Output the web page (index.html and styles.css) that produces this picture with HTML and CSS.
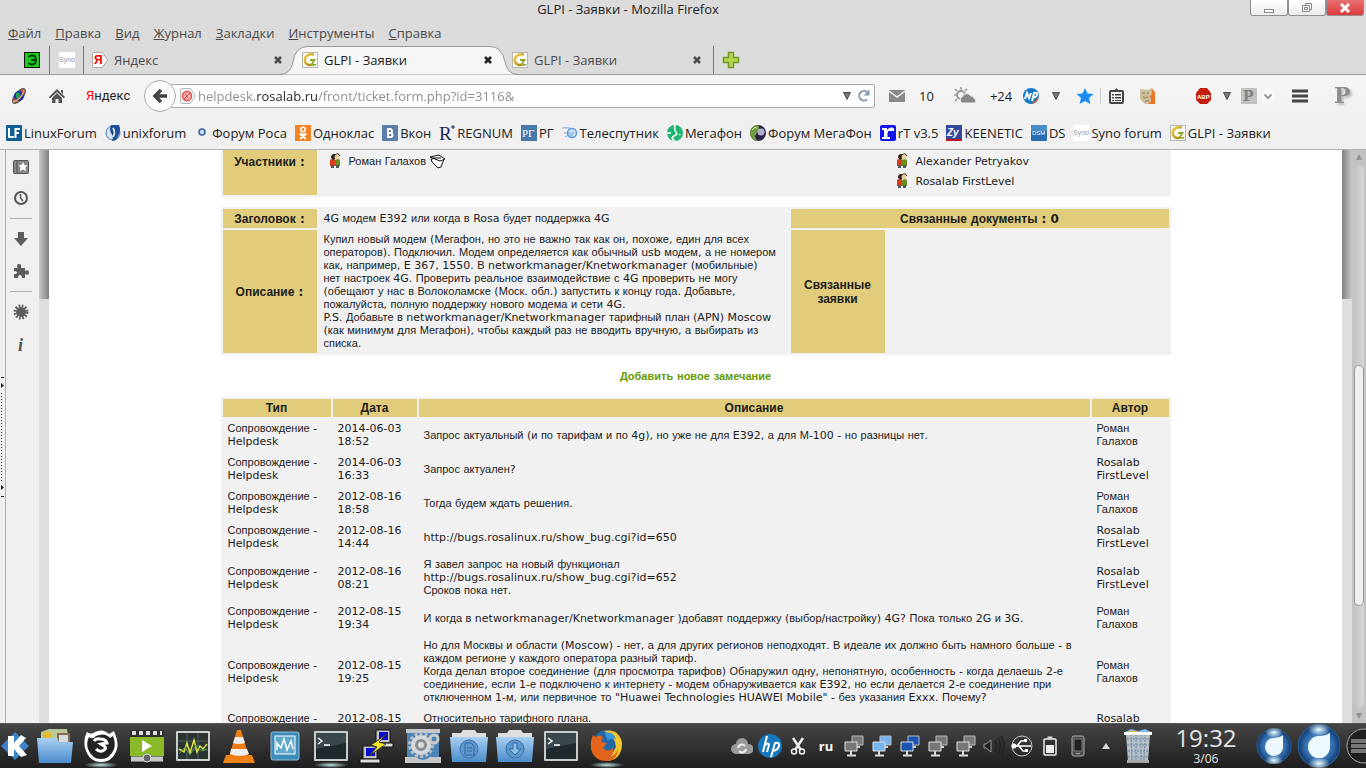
FILE: index.html
```html
<!DOCTYPE html>
<html lang="ru">
<head>
  <meta charset="UTF-8">
  <meta name="viewport" content="width=device-width, initial-scale=1.0">
  <title>GLPI - Заявки - Mozilla Firefox</title>
  <link rel="stylesheet" href="styles.css">
</head>
<body>
  <!-- shared icons -->
  <svg class="defs" width="0" height="0">
    <defs>
      <linearGradient id="gGold" x1="0" y1="0" x2="1" y2="1"><stop offset="0" stop-color="#f0cf50"/><stop offset="1" stop-color="#b07c00"/></linearGradient>
      <linearGradient id="gFold" x1="0" y1="0" x2="0" y2="1"><stop offset="0" stop-color="#a8d0f2"/><stop offset="1" stop-color="#4a8ccc"/></linearGradient>
      <linearGradient id="gMetal" x1="0" y1="0" x2="0" y2="1"><stop offset="0" stop-color="#fff"/><stop offset="1" stop-color="#a4a4a4"/></linearGradient>
      <radialGradient id="gDrop" cx=".5" cy=".5" r=".5"><stop offset="0" stop-color="#7fb4e4"/><stop offset=".7" stop-color="#2f68a8"/><stop offset="1" stop-color="#123a70"/></radialGradient>
      <radialGradient id="gGlow"><stop offset="0" stop-color="#e8ffff"/><stop offset="1" stop-color="#e8ffff" stop-opacity="0"/></radialGradient>
    </defs>
    <symbol id="glpi" viewBox="0 0 16 16"><rect x=".5" y=".5" width="15" height="15" fill="#fff" stroke="#b5b5a8"/><path d="M12 2.500C6.500 1.300 2.800 4 2.800 8c0 4 3 5.500 6.500 4.800" fill="none" stroke="url(#gGold)" stroke-width="2.600"/><path d="M8 8h4.500L9.500 12.800h4.500" fill="none" stroke="#8aa820" stroke-width="1.800"/></symbol>
    <symbol id="syno" viewBox="0 0 16 16"><rect width="16" height="16" fill="#fff"/><text x="0" y="10" font-size="7" fill="#999" font-family="Liberation Sans">Syno</text></symbol>
    <symbol id="cross" viewBox="0 0 10 10"><path d="M2 2l6 6M8 2L2 8" stroke="currentColor" stroke-width="2.600"/></symbol>
    <symbol id="tri" viewBox="0 0 10 10"><path d="M1.500 1.500h7L5 8.500z" fill="#777" stroke="#4c4c4c"/></symbol>
    <symbol id="people" viewBox="0 0 12 16"><path d="M1 7q2-2 5 0v6H1z" fill="#d83c1c"/><path d="M6 7q3-2 5 0v6H6z" fill="#6c8c20"/><path d="M2 5q0-4 3-4 2 0 2 4l-2 2z" fill="#2c2018"/><circle cx="8" cy="4" r="2.500" fill="#e6cf9a"/><path d="M6 2q3-3 5 1" stroke="#222" fill="none"/><path d="M2 12h3v3H2zM7 12h3v3H7z" fill="#4c5a5c"/></symbol>
    <symbol id="term" viewBox="0 0 36 36"><rect x="1" y="3" width="34" height="30" rx="1" fill="#c8ccca"/><rect x="3" y="5" width="30" height="26" fill="#20292d"/><path d="M3 5h30v10L3 21z" fill="#4d5b62" opacity=".6"/><path d="M5 10l4 3-4 3M11 17h6" fill="none" stroke="#fff" stroke-width="1.500"/></symbol>
    <symbol id="net" viewBox="0 0 20 22"><path d="M8 1h11v9H8z" fill="currentColor" stroke="#b9b9b9"/><path d="M12 11h4v2h-4z" fill="#ccc"/><path d="M1 7h12v9H1z" fill="currentColor" stroke="#e0e0e0"/><path d="M7 16v4M3 20.500h9" stroke="#ddd" stroke-width="2"/></symbol>
    <symbol id="folder" viewBox="0 0 38 34"><path d="M2 9V4h9l2-3h12l2 3h9v5z" fill="#dedede"/><path d="M0 8h38l-2 25H2z" fill="url(#gFold)"/></symbol>
    <symbol id="drop" viewBox="0 0 40 40"><circle cx="20" cy="20" r="19" fill="url(#gDrop)" stroke="#28609c"/><ellipse cx="20" cy="5" rx="10" ry="6" fill="url(#gGlow)"/><ellipse cx="20" cy="36" rx="10" ry="6" fill="url(#gGlow)"/><path d="M30 8v13a10 10 0 1 1-10-10q6 0 10-3z" fill="#edf8ff"/></symbol>
  </svg>

  <header class="titlebar">
    <h1 class="window-title">GLPI - Заявки - Mozilla Firefox</h1>
    <div class="window-buttons">
      <button aria-label="Свернуть"><svg width="12" height="12"><rect x="1.500" y="7.500" width="9" height="3" fill="#fff" stroke="#888"/></svg></button>
      <button aria-label="Восстановить"><svg width="12" height="12"><path d="M4.500 3.500v-2h6v6h-2M1.500 3.500h7v6h-7zM3.500 5.500h3v2h-3z" fill="none" stroke="#888"/></svg></button>
      <button class="close" aria-label="Закрыть"><svg width="12" height="12"><path d="M2 2l8 8M10 2l-8 8" stroke="#fff" stroke-width="3"/></svg></button>
    </div>
  </header>

  <nav class="menubar">
    <a href="#"><u>Ф</u>айл</a>
    <a href="#"><u>П</u>равка</a>
    <a href="#"><u>В</u>ид</a>
    <a href="#"><u>Ж</u>урнал</a>
    <a href="#"><u>З</u>акладки</a>
    <a href="#"><u>И</u>нструменты</a>
    <a href="#"><u>С</u>правка</a>
  </nav>

  <div class="tabs">
    <div class="tab pinned first"><svg width="16" height="16"><rect x=".5" y=".5" width="15" height="15" fill="#1fc71f" stroke="#111"/><path d="M4.500 5Q6 3.500 8 3.500q4 0 4 4.500t-4 4.500q-2 0-3.500-1.500M7 8h5" fill="none" stroke="#063c06" stroke-width="1.800"/></svg></div>
    <div class="tab pinned"><svg width="16" height="16"><use href="#syno"/></svg></div>
    <div class="tab">
      <svg width="16" height="16"><path d="M1.500.5h9l5 7.500-5 7.500h-9q-1 0-1-1v-13q0-1 1-1z" fill="#f8f8f8" stroke="#aaa"/><text x="2" y="12" font-size="12" font-weight="bold" fill="#f00" font-family="Liberation Sans">Я</text></svg>
      <span>Яндекс</span>
      <button aria-label="Закрыть вкладку"><svg width="10" height="10"><use href="#cross"/></svg></button>
    </div>
    <div class="tab active">
      <svg class="tab-shape" width="238" height="29"><path d="M0 28.500Q11 28 13 16Q15 .5 28 .5H210Q222 .5 225 16Q227 28 238 28.500" fill="#f6f6f6" stroke="#999"/></svg>
      <svg width="16" height="16"><use href="#glpi"/></svg>
      <span>GLPI - Заявки</span>
      <button aria-label="Закрыть вкладку"><svg width="10" height="10"><use href="#cross"/></svg></button>
    </div>
    <div class="tab last">
      <svg width="16" height="16"><use href="#glpi"/></svg>
      <span>GLPI - Заявки</span>
      <button aria-label="Закрыть вкладку"><svg width="10" height="10"><use href="#cross"/></svg></button>
    </div>
    <button class="new-tab" aria-label="Новая вкладка"><svg width="18" height="18"><path d="M6.500 1.500h5v5h5v5h-5v5h-5v-5h-5v-5h5z" fill="#b4d44c" stroke="#6c9a28" stroke-width="1.500"/></svg></button>
  </div>

  <div class="navbar">
    <div class="nav-left">
      <svg width="18" height="18"><ellipse cx="9" cy="9" rx="9" ry="4" transform="rotate(-50 9 9)" fill="#b8584c" stroke="#555"/><circle cx="9" cy="9" r="5" fill="#152ab0"/><path d="M6 6q4-2 4 2t-3 4q-2-3-1-6z" fill="#1fa050"/><path d="M3 15Q12 12 14 3" fill="none" stroke="#d8a060" stroke-width="1.500"/></svg>
      <svg width="16" height="16"><path d="M0 9L8 1l8 8-1 1.500L8 4 1 10.500zM3 10l5-5 5 5v5H9.500v-4h-3v4H3zM12 2h2v4l-2-2z" fill="#555"/></svg>
      <span class="ya"><b>Я</b>ндекс</span>
    </div>
    <button class="back" aria-label="Назад"><svg width="16" height="16"><path d="M9 2L3 8l6 6M3 8h12" fill="none" stroke="#444" stroke-width="3.500"/></svg></button>
    <div class="urlbar">
      <svg width="16" height="16"><path d="M1.500.5h9l5 7.500-5 7.500h-9q-1 0-1-1v-13q0-1 1-1z" fill="#eee" stroke="#bbb"/><circle cx="7" cy="8" r="4.500" fill="#fbb" stroke="#e05050" stroke-width="1.500"/><path d="M4 11l6-6M5 6l3 4" stroke="#d33"/></svg>
      <input type="text" aria-label="Адрес" value="helpdesk.rosalab.ru/front/ticket.form.php?id=3116&amp;">
      <svg width="10" height="10"><use href="#tri"/></svg>
      <svg width="14" height="14"><path d="M10 10.500A4.800 4.800 0 1 1 10 3" fill="none" stroke="#8a9db0" stroke-width="2"/><path d="M12.500 0v6.500H6.500z" fill="#8a9db0"/></svg>
    </div>
    <div class="nav-right">
      <svg width="16" height="16"><path d="M0 2h16v12H0z" fill="#888"/><path d="M0 3l8 6 8-6" fill="none" stroke="#f2f2f2" stroke-width="1.500"/></svg>
      <span class="count">10</span>
      <svg class="weather" width="24" height="18"><circle cx="8" cy="8" r="4" fill="none" stroke="#999" stroke-width="2"/><path d="M8 0v3M1 8h2M2 2l2 2M14 2l-2 2M2 14l2-2" stroke="#999" stroke-width="1.500"/><path d="M9 16a3.500 3.500 0 0 1 0-6 5 5 0 0 1 9-1q3 0 3 2.500 2 .5 2 2.500t-2 2z" fill="#888" stroke="#eee"/></svg>
      <span class="temp">+24</span>
      <svg width="16" height="16"><circle cx="8" cy="8" r="8" fill="#1678c8"/><path d="M15.500 8A8 8 0 0 1 8 16q5-3 7.500-8z" fill="#f06020"/><path d="M2 11l2-6 2 5 2-5M9 13l2-8q4-1 3 2t-4 2" fill="none" stroke="#fff" stroke-width="2"/></svg>
      <svg class="arrow" width="10" height="10"><use href="#tri"/></svg>
      <svg class="star" width="18" height="18"><path d="M9 1l2.500 5.500 6 .5-4.500 4 1.500 6L9 14l-5.500 3L5 11 .5 7l6-.5z" fill="#1a8cf4"/></svg>
      <svg class="clip" width="15" height="16"><path d="M2 3h11q1 0 1 1v10q0 1-1 1H2q-1 0-1-1V4q0-1 1-1z" fill="none" stroke="#444" stroke-width="2"/><path d="M4 2h2l1.500-2L9 2h2v2H4zM3 6h2v1.500H3zM6 6h6v1.500H6zM3 9h2v1.500H3zM6 9h6v1.500H6zM3 12h2v1H3zM6 12h6v1H6z" fill="#444"/></svg>
      <svg class="face" width="17" height="16"><path d="M1 1l8 1 4-2 3 4v12H6L1 11z" fill="#cdbf9c"/><path d="M12 0l4 4v12H9q5-3 2-8 4-3 1-8z" fill="#ee7622"/><path d="M3 5h3M8 5h2M4 9q2 2 5 0M6 13h4" fill="none" stroke="#8a7a5c"/></svg>
      <svg width="17" height="16"><path d="M5 0h7l4 5v7l-4 4H5l-4-4V5z" fill="#c42010"/><text x="2" y="11" font-size="6" font-weight="bold" fill="#fff" font-family="Liberation Sans">ABP</text></svg>
      <svg class="arrow" width="10" height="10"><use href="#tri"/></svg>
      <svg width="16" height="16"><rect width="16" height="16" fill="#c0c0c0"/><text x="2" y="13" font-size="14" font-weight="bold" fill="#808080" font-family="DejaVu Serif">P</text></svg>
      <svg class="chev" width="16" height="16"><circle cx="8" cy="8" r="7.500" fill="#f8f8f8"/><path d="M4.500 6.500L8 10l3.500-3.500" fill="none" stroke="#999" stroke-width="2"/></svg>
      <svg class="burger" width="16" height="16"><path d="M0 3h16M0 8h16M0 13h16" stroke="#444" stroke-width="3"/></svg>
      <svg class="big-p" width="22" height="26"><text x="0" y="20" font-size="22" font-weight="bold" fill="#8d8d8d" font-family="DejaVu Serif">P</text></svg>
    </div>
  </div>

  <nav class="bookmarks">
    <a href="#"><svg width="16" height="16"><rect width="16" height="16" rx="1" fill="#0f5f96"/><path d="M3 3v9h5M9.500 13V4H14M10 8h3" fill="none" stroke="#fff" stroke-width="2"/></svg>LinuxForum</a>
    <a href="#"><svg width="16" height="16"><circle cx="8" cy="8" r="7" fill="#d6e4f4" stroke="#4b7cb8"/><path d="M6 0h8q3 6-3 15l-4 1q2-5-1-8-2-4 0-8z" fill="#1d4e96"/><path d="M8 3q3 5 0 9" fill="none" stroke="#fff" stroke-width="1.500"/></svg>unixforum</a>
    <a href="#"><svg width="16" height="16"><circle cx="8" cy="7" r="3" fill="#c4def6" stroke="#3c6498" stroke-width="1.500"/></svg>Форум Роса</a>
    <a href="#"><svg width="16" height="16"><rect width="16" height="16" fill="#f58220"/><circle cx="8" cy="4.500" r="2.200" fill="none" stroke="#fff" stroke-width="1.600"/><path d="M4.500 8.500q3.500 2 7 0M5 14l6-5M11 14L5 9" fill="none" stroke="#fff" stroke-width="1.800"/></svg>Одноклас</a>
    <a href="#"><svg width="16" height="16"><rect width="16" height="16" rx="1" fill="#5b7fa8"/><path d="M6 4v8h2.500q2 0 2-2t-2-2H6h2q2 0 2-2T8 4z" fill="none" stroke="#fff" stroke-width="1.800"/></svg>Вкон</a>
    <a href="#"><svg width="16" height="16"><text x="0" y="15" font-size="19" fill="#182458" font-family="Liberation Serif">R</text><path d="M14 0v4M12 2h4" stroke="#182458"/></svg>REGNUM</a>
    <a href="#"><svg width="16" height="16"><rect width="16" height="16" fill="#4678a8"/><text x="1" y="12" font-size="11" fill="#fff" font-family="Liberation Serif">РГ</text></svg>РГ</a>
    <a href="#"><svg width="16" height="16"><circle cx="10" cy="8" r="4.500" fill="#d0e6fa" stroke="#5b96d8" stroke-width="1.500"/><path d="M0 3q6-1 11 1M2 8h10M3 12q4-3 8-2" fill="none" stroke="#78a8dc"/></svg>Телеспутник</a>
    <a href="#"><svg width="16" height="16"><circle cx="8" cy="8" r="8" fill="#21b573"/><path d="M8 0q-1 5 1 7t-2 4 1 5M0 8h4" fill="none" stroke="#fff" stroke-width="1.500"/><path d="M9 9.500h1.500M12 9.500h1.500" stroke="#fff" stroke-width="1.500"/></svg>Мегафон</a>
    <a href="#"><svg width="16" height="16"><circle cx="8" cy="8" r="8" fill="#2c2148"/><path d="M8 0a8 8 0 0 0 0 16q-5-4-1-8t1-8z" fill="#6f9c3c"/><circle cx="11" cy="7" r="3.500" fill="#b4acd0"/><path d="M2 5q3-4 5-2" stroke="#dff0c8" fill="none"/></svg>Форум МегаФон</a>
    <a href="#"><svg width="16" height="16"><rect width="16" height="16" rx="2" fill="#1414ec"/><path d="M2 3h5v2q2-3 5-2.500 3 .5 2 3.500h-3q-3-1-3.500 2v4H10v2H2v-2h2V5H2z" fill="#fff"/></svg>rT v3.5</a>
    <a href="#"><svg width="16" height="16"><rect width="16" height="16" fill="#34489c"/><path d="M0 14h16v2H0z" fill="#c01020"/><text x="1" y="11" font-size="10" font-weight="bold" font-style="italic" fill="#fff" font-family="Liberation Sans">Zy</text></svg>KEENETIC</a>
    <a href="#"><svg width="16" height="16"><rect width="16" height="16" rx="1" fill="#2a6cb0"/><path d="M0 0h16v6H0z" fill="#4c8cc8"/><text x="1" y="10" font-size="6" fill="#fff" font-family="Liberation Sans">DSM</text></svg>DS</a>
    <a href="#"><svg width="16" height="16"><use href="#syno"/></svg>Syno forum</a>
    <a href="#"><svg width="16" height="16"><use href="#glpi"/></svg>GLPI - Заявки</a>
  </nav>

  <div class="workspace">
    <div class="splitter"><svg width="5" height="124"><path d="M1 2.500h3M1 121.500h3" stroke="#222"/><path d="M1 8v5l3-2.500zM1 110v5l3-2.500z" fill="#222"/><path d="M1.500 18v88" stroke="#333" stroke-dasharray="1 2"/></svg></div>
    <aside class="sidebar">
      <svg width="16" height="14"><rect x=".5" y=".5" width="15" height="13" rx="1" fill="#888" stroke="#555"/><path d="M4 0v14" stroke="#555"/><path d="M10 2l1.500 3 3 .5-2 2 .5 3.500-3-1.500L7 11l.5-3.500-2-2 3-.5z" fill="#fff"/></svg>
      <svg width="16" height="16"><circle cx="8" cy="8" r="6" fill="none" stroke="#555" stroke-width="2"/><path d="M7.500 4v4l2.500 3" fill="none" stroke="#555" stroke-width="1.500"/></svg>
      <hr>
      <svg width="16" height="16"><path d="M5 1h6v6h4l-7 8-7-8h4z" fill="#5c5c5c"/></svg>
      <svg width="16" height="16"><path d="M1 5h3.500Q3 1 6 1t2 4h4v3q4-2 4 1.500T12 11v4H9q0-3-2-3t-2 3H1v-4q3 0 3-1.500T1 8z" fill="#5c5c5c"/></svg>
      <hr>
      <svg width="16" height="16"><circle cx="8" cy="8" r="5" fill="#5c5c5c"/><circle cx="8" cy="8" r="6" fill="none" stroke="#5c5c5c" stroke-width="3" stroke-dasharray="1.700 1.440"/></svg>
      <svg width="16" height="18"><text x="5" y="15" font-size="18" font-weight="bold" font-style="italic" fill="#555" font-family="Liberation Serif">i</text></svg>
    </aside>

    <main class="viewport">
      <div class="page">
        <table class="grid people">
          <tr>
            <th class="key">Участники :</th>
            <td>
              <p><svg width="12" height="16"><use href="#people"/></svg><span>Роман Галахов</span><svg class="mail" width="16" height="16"><path d="M1 6l7-1 6 1-3 8-3 1-6-6z" fill="#fff" stroke="#111"/><path d="M0 4l9-2 6 4-5 2z" fill="#fff" stroke="#111"/><path d="M3 5h8" stroke="#111"/></svg></p>
            </td>
            <td class="assigned">
              <p><svg width="12" height="16"><use href="#people"/></svg><span>Alexander Petryakov</span></p>
              <p><svg width="12" height="16"><use href="#people"/></svg><span>Rosalab FirstLevel</span></p>
            </td>
          </tr>
        </table>

        <table class="grid ticket">
          <colgroup><col class="key"><col class="text"><col class="key"><col></colgroup>
          <tr>
            <th>Заголовок :</th>
            <td>4G модем E392 или когда в Rosa будет поддержка 4G</td>
            <th colspan="2">Связанные документы : 0</th>
          </tr>
          <tr>
            <th>Описание :</th>
            <td class="description">Купил новый модем (Мегафон, но это не важно так как он, похоже, един для всех операторов). Подключил. Модем определяется как обычный usb модем, а не номером как, например, E 367, 1550. В networkmanager/Knetworkmanager (мобильные) нет настроек 4G. Проверить реальное взаимодействие с 4G проверить не могу (обещают у нас в Волоколамске (Моск. обл.) запустить к концу года. Добавьте, пожалуйста, полную поддержку нового модема и сети 4G.<br>P.S. Добавьте в networkmanager/Knetworkmanager тарифный план (APN) Moscow (как минимум для Мегафон), чтобы каждый раз не вводить вручную, а выбирать из списка.</td>
            <th>Связанные заявки</th>
            <td></td>
          </tr>
        </table>

        <a class="add-note" href="#">Добавить новое замечание</a>

        <table class="grid notes">
          <tr><th class="type">Тип</th><th class="date">Дата</th><th>Описание</th><th class="author">Автор</th></tr>
          <tr><td>Сопровождение - Helpdesk</td><td>2014-06-03 18:52</td><td>Запрос актуальный (и по тарифам и по 4g), но уже не для E392, а для М-100 - но разницы нет.</td><td>Роман Галахов</td></tr>
          <tr><td>Сопровождение - Helpdesk</td><td>2014-06-03 16:33</td><td>Запрос актуален?</td><td>Rosalab FirstLevel</td></tr>
          <tr><td>Сопровождение - Helpdesk</td><td>2012-08-16 18:58</td><td>Тогда будем ждать решения.</td><td>Роман Галахов</td></tr>
          <tr><td>Сопровождение - Helpdesk</td><td>2012-08-16 14:44</td><td>http://bugs.rosalinux.ru/show_bug.cgi?id=650</td><td>Rosalab FirstLevel</td></tr>
          <tr><td>Сопровождение - Helpdesk</td><td>2012-08-16 08:21</td><td>Я завел запрос на новый функционал<br>http://bugs.rosalinux.ru/show_bug.cgi?id=652<br>Сроков пока нет.</td><td>Rosalab FirstLevel</td></tr>
          <tr><td>Сопровождение - Helpdesk</td><td>2012-08-15 19:34</td><td>И когда в networkmanager/Knetworkmanager )добавят поддержку (выбор/настройку) 4G? Пока только 2G и 3G.</td><td>Роман Галахов</td></tr>
          <tr><td>Сопровождение - Helpdesk</td><td>2012-08-15 19:25</td><td>Но для Москвы и области (Moscow) - нет, а для других регионов неподходят. В идеале их должно быть намного больше - в каждом регионе у каждого оператора разный тариф.<br>Когда делал второе соединение (для просмотра тарифов) Обнаружил одну, непонятную, особенность - когда делаешь 2-е соединение, если 1-е подключено к интернету - модем обнаруживается как E392, но если делается 2-е соединение при отключенном 1-м, или первичное то "Huawei Technologies HUAWEI Mobile" - без указания Exxx. Почему?</td><td>Роман Галахов</td></tr>
          <tr><td>Сопровождение -</td><td>2012-08-15</td><td>Относительно тарифного плана.</td><td>Rosalab</td></tr>
        </table>
      </div>
    </main>

    <div class="scrollbar">
      <svg width="8" height="8"><path d="M4 1l3 6H1z" fill="#909090"/></svg>
      <div class="track"><div class="thumb"></div></div>
      <svg width="8" height="8"><path d="M4 7l3-6H1z" fill="#909090"/></svg>
    </div>
  </div>

  <footer class="taskbar">
    <div class="launchers">
      <button class="kmenu" aria-label="Меню"><svg width="32" height="32"><path d="M15 2l14 14-14 14L1 16z" fill="#3c84c8"/><path d="M8 6h6v7l7-8 5 3-7 8 8 9-6 2-7-8v7H8z" fill="#fff"/></svg></button>
      <button aria-label="Файлы"><svg width="36" height="36"><path d="M4 4l8-3h18l2 12H4z" fill="#b7c89a"/><path d="M6 4h8v8H6z" fill="#e2b82c"/><path d="M20 5h13v14H20z" fill="#8c6850"/><path d="M22 7h9v10h-9z" fill="#d4dce0"/><path d="M0 10h20l2 4h14l-2 21H2z" fill="url(#gFold)"/></svg></button>
      <button class="running" aria-label="Firefox Nightly"><svg width="34" height="34"><path d="M3 3q4 3 8 0 8-4 14 2l5-3q5 12 3 18-4 13-16 13T1 19Q-1 10 3 3z" fill="#fff"/><path d="M5 8q4 3 7-1 9-4 14 2l3-2q3 8 1 13-4 10-13 10T4 20q-2-6 1-12z" fill="#222"/><path d="M10 12q2-3 6-2 6 0 7 4l-6 1 3 2q3 2 0 4-4 3-8-1" fill="none" stroke="#fff" stroke-width="3"/></svg></button>
      <button aria-label="Видео"><svg width="34" height="34"><rect width="34" height="32" y="1" fill="#2e2e2e"/><path d="M2 4h30" stroke="#ddd" stroke-width="4" stroke-dasharray="4 3"/><rect y="8" width="34" height="19" fill="#8aba28"/><path d="M12 11l10 6-10 6z" fill="#fff"/><path d="M1 30h32" stroke="#c8c8c8" stroke-width="5"/><circle cx="17" cy="29" r="4" fill="#666" stroke="#ddd"/></svg></button>
      <button aria-label="Монитор ресурсов"><svg width="36" height="32"><rect x="1" y="1" width="34" height="30" rx="1" fill="#cdd0cc"/><rect x="3" y="3" width="30" height="26" fill="#2b3333"/><path d="M3 11h30M3 20h30M12 3v26M23 3v26" stroke="#55605c"/><path d="M4 19l5 3 3-9 3 10 4-13 3 12 3-6 3 3 4-5" fill="none" stroke="#dce040" stroke-width="1.500"/><path d="M4 24l6-7 5 8 6-10 6 6 5-2" fill="none" stroke="#4c9a58"/></svg></button>
      <button aria-label="VLC"><svg width="32" height="34"><path d="M3 26h26l3 8H0z" fill="#f08418"/><path d="M14 1h4l8 27q-10 4-20 0z" fill="#f07c10"/><path d="M12 8h8l2 6q-6 2-12 0zM8 20h16l2 5q-10 4-19 0z" fill="#eee"/></svg></button>
      <button aria-label="Система"><svg width="30" height="30"><rect x="1" y="1" width="28" height="28" rx="2" fill="#3d8bb8" stroke="#8cc0dc"/><rect x="5" y="5" width="20" height="18" fill="#62aacc" stroke="#fff"/><path d="M7 19v-7l4 5 3-9 3 11 4-9 2 8" fill="none" stroke="#fff" stroke-width="1.500"/></svg></button>
      <button class="running" aria-label="Терминал"><svg width="36" height="36"><use href="#term"/></svg></button>
      <button aria-label="PuTTY"><svg width="36" height="36"><path d="M17 2h14v13H17zM4 18h14v13H4z" fill="#c4c4c4" stroke="#111"/><path d="M20 4h9v8h-9zM7 20h9v8H7z" fill="#0808d8"/><path d="M15 15h19v4H15zM1 31h20v4H1z" fill="#ddd" stroke="#111"/><path d="M28 6L12 17l6 2-8 9 17-12-7-2z" fill="#f4e828" stroke="#333"/></svg></button>
      <button aria-label="Настройки"><svg width="36" height="36"><rect x="2" y="3" width="32" height="29" fill="#4c84b8"/><path d="M1 1h34v4H1zM0 29h11q7 6 14 0h11v6H0z" fill="#c4c8ca"/><circle cx="16" cy="17" r="11" fill="none" stroke="#b8bcbe" stroke-width="4" stroke-dasharray="3 2"/><circle cx="16" cy="17" r="8" fill="#888e90" stroke="#d4d8da" stroke-width="4"/><circle cx="16" cy="17" r="3" fill="#ddd"/><circle cx="29" cy="11" r="4" fill="none" stroke="#c8c8c8" stroke-width="3"/></svg></button>
      <button aria-label="Документы"><svg width="38" height="34"><use href="#folder"/><circle cx="19" cy="20" r="9" fill="#5c98cc" stroke="#3870a8"/><path d="M15 14h6l3 3v9h-9zM17 19h5M17 22h5" fill="none" stroke="#3468a0"/></svg></button>
      <button aria-label="Загрузки"><svg width="38" height="34"><use href="#folder"/><circle cx="19" cy="20" r="9" fill="#5c98cc" stroke="#3870a8"/><path d="M17 14h4v6h4l-6 6-6-6h4z" fill="#8cc0ec" stroke="#3468a0"/></svg></button>
      <button aria-label="Терминал"><svg width="36" height="36"><use href="#term"/></svg></button>
      <button class="running" aria-label="Firefox"><svg width="34" height="34"><circle cx="17" cy="16" r="15" fill="#2468a8"/><path d="M14 2q15-3 18 12 0 16-14 18l8-14q0-10-12-16z" fill="#f4c62c"/><path d="M3 6l3 2q4-3 7 0l-2 5 6 1-4 5q4 5 10 0 1 7-5 9 9-1 10-10 0 14-12 14T1 20Q0 12 3 6z" fill="#e4641c"/><path d="M15 4q8-2 11 6-5-2-8 2-2-4-3-8z" fill="#3a98dc"/></svg></button>
    </div>

    <div class="tray">
      <span><svg width="22" height="20"><path d="M5 18a5 5 0 0 1 0-10 6 6 0 0 1 12 0 5 5 0 0 1 1 10z" fill="#9a9a9a"/><path d="M7 12a4 4 0 0 1 7-2M15 13a4 4 0 0 1-7 2" fill="none" stroke="#eee" stroke-width="2"/></svg></span>
      <span><svg width="24" height="24"><circle cx="12" cy="12" r="12" fill="#1678bc"/><path d="M9 2L5 18M7 11q4-3 4 0l-2 7M13 23l4-14q5-1 4 3t-6 5" fill="none" stroke="#fff" stroke-width="2"/></svg></span>
      <span><svg width="16" height="18"><path d="M3 1l8 12M13 1L5 13" stroke="#eee" stroke-width="2.500"/><circle cx="4" cy="14.500" r="2.500" fill="none" stroke="#eee" stroke-width="1.500"/><circle cx="12" cy="14.500" r="2.500" fill="none" stroke="#eee" stroke-width="1.500"/></svg></span>
      <span class="lang">ru</span>
      <span class="gray"><svg width="20" height="22"><use href="#net"/></svg></span>
      <span class="sky"><svg width="20" height="22"><use href="#net"/></svg></span>
      <span class="blue"><svg width="20" height="22"><use href="#net"/></svg></span>
      <span class="gray"><svg width="20" height="22"><use href="#net"/></svg></span>
      <span class="gray"><svg width="20" height="22"><use href="#net"/></svg></span>
      <span><svg width="24" height="24"><path d="M2 10h2l5-4v12l-5-4H2z" fill="#222" stroke="#999"/><path d="M13 7q3 5 0 10M16 4q5 8 0 16M19 2q6 10 0 20" fill="none" stroke="#242424" stroke-width="2"/></svg></span>
      <span><svg width="22" height="22"><circle cx="11" cy="11" r="10" fill="none" stroke="#ccc"/><path d="M2 11h18M6 11l4-5h4M8 11l4 5h3" fill="none" stroke="#fff" stroke-width="1.500"/><circle cx="3" cy="11" r="2.500" fill="#fff"/><path d="M13 4h3v3h-3zM14 14h3v3h-3z" fill="#fff"/></svg></span>
      <span><svg width="14" height="20"><path d="M4.500.5h5v2h-5z" fill="#ddd"/><rect x="1" y="3" width="12" height="16" rx="1" fill="#333" stroke="#eee" stroke-width="1.500"/><path d="M3 9h8v8H3z" fill="#eee"/></svg></span>
      <span><svg width="14" height="22"><rect x="1" y="1" width="12" height="20" rx="2" fill="#4c4c4c" stroke="#aaa"/><rect x="3" y="4" width="8" height="12" fill="#222" stroke="#777"/><path d="M5 18.500h4" stroke="#aaa"/></svg></span>
      <span><svg width="8" height="6"><path d="M4 0l4 6H0z" fill="#ddd"/></svg></span>
      <span class="trash"><svg width="30" height="34"><path d="M2 3l6-3 7 2 7-2 6 3v3H2z" fill="#7cb8ec"/><path d="M6 2h8v3H6z" fill="#f4b828"/><path d="M3 5h24l-2 28H5z" fill="#b4bec6"/><path d="M8 5l1 27M13 5v27M18 5v27M22 5l-1 27M4 10h22M4 16h22M5 22h20M5 28h20" stroke="#6c88a6" stroke-dasharray="2 1"/><path d="M1 3h28v3H1zM4 31h22v3H4z" fill="url(#gMetal)"/></svg></span>
      <time class="clock"><b>19:32</b><small>3/06</small></time>
      <svg width="36" height="36"><use href="#drop"/></svg>
      <svg width="44" height="44"><use href="#drop"/></svg>
      <svg class="cashew" width="20" height="36"><circle cx="18" cy="18" r="17" fill="#202020" stroke="#aaa"/><path d="M5 13h15M5 18h15M5 23h15" stroke="#777" stroke-width="4"/></svg>
    </div>
  </footer>

  <script src="script.js"></script>
</body>
</html>
```
FILE: styles.css
```css
* { box-sizing: border-box; }

body {
  margin: 0;
  height: 100vh;
  display: flex;
  flex-direction: column;
  overflow: hidden;
  background: #dbdbdb;
  color: #222;
  font: 13px/18px "Open Sans", "Noto Sans", sans-serif;
}

a { color: inherit; text-decoration: none; }
svg { display: block; flex: none; }
.defs { position: absolute; }

button {
  display: flex;
  align-items: center;
  justify-content: center;
  padding: 0;
  border: 0;
  background: none;
  color: inherit;
  flex: none;
}

/* window frame */
.titlebar {
  display: grid;
  grid-template-columns: 1fr auto 1fr;
  height: 22px;
  padding: 0 2px 0 4px;
}

.window-title {
  grid-column: 2;
  margin: 0 112px 0 0;
  font-size: 13px;
  font-weight: normal;
  line-height: 18px;
}

.window-buttons {
  justify-self: end;
  display: flex;
  height: 16px;
}

.window-buttons button {
  width: 38px;
  background: linear-gradient(#fff, #ececec);
  border: 1px solid #909090;
  border-top: 0;
  border-radius: 0 0 3px 3px;
}

.window-buttons .close { background: linear-gradient(#e87070, #dc3c3c); }

.menubar {
  display: flex;
  gap: 14px;
  height: 24px;
  padding: 2px 8px;
  color: #4a4a4a;
}

/* tabs */
.tabs {
  display: flex;
  height: 29px;
  flex: none;
  border-bottom: 1px solid #999;
}

.tab {
  position: relative;
  display: flex;
  align-items: center;
  gap: 6px;
  width: 210px;
  padding: 0 11px 0 8px;
  color: #4c4c4c;
}

.tab span { flex: 1; position: relative; }
.tab svg { position: relative; }
.tab.pinned { width: 34px; padding: 0 9px; border-right: 1px solid #77776c; }
.tab.pinned.first { width: 50px; padding-left: 24px; }
.tab.active { color: #222; z-index: 1; }
.tab .tab-shape { position: absolute; left: -14px; top: 0; }
.tab.last { border-right: 1px solid #77776c; }
.new-tab { width: 34px; }

/* navigation */
.navbar {
  display: flex;
  align-items: center;
  height: 42px;
  flex: none;
  background: linear-gradient(#f6f6f6, #f0f0f0);
}

.nav-left {
  display: flex;
  align-items: center;
  gap: 21px;
  width: 144px;
  padding-left: 10px;
}

.ya { font: 13px/20px Roboto, sans-serif; }
.ya b { color: #f00; font-weight: normal; }

.back {
  width: 32px;
  height: 32px;
  border: 1px solid #a4b0bc;
  border-radius: 50%;
  background: #fbfbfb;
  z-index: 1;
}

.urlbar {
  display: flex;
  align-items: center;
  gap: 5px;
  flex: 1;
  height: 24px;
  margin-left: -6px;
  padding: 0 3px 0 9px;
  background: #fff;
  border: 1px solid #aaa;
  border-radius: 2px;
}

/* the host name is darker than the rest of the address */
.urlbar input {
  flex: 1;
  height: 20px;
  margin-left: -3px;
  padding: 0;
  border: 0;
  outline: 0;
  font: inherit;
  color: transparent;
  background: linear-gradient(90deg, #8c8c8c 58px, #222 58px, #222 119px, #8c8c8c 119px);
  -webkit-background-clip: text;
  background-clip: text;
}

.nav-right {
  display: flex;
  align-items: center;
  width: 491px;
  padding-left: 14px;
}

.count { margin-left: 14px; }
.weather { margin-left: 19px; }
.temp { margin: 0 11px 0 13px; }
.star { margin: 0 6px; }
.clip { padding-left: 8px; box-sizing: content-box; border-left: 1px solid #ccc; }
.face { margin: 0 39px 0 15px; }
.nav-right .arrow { margin: 0 9px 0 12px; }
.nav-right .face ~ .arrow { margin-left: 10px; }
.chev { margin: 0 16px 0 3px; }
.burger { margin-right: 26px; }
.big-p { filter: drop-shadow(2px 2px 1px #bbb); }

.bookmarks {
  display: flex;
  gap: 8px;
  height: 33px;
  flex: none;
  padding: 0 6px;
  background: #f0f0f0;
  border-bottom: 1px solid #b0b0b0;
  white-space: nowrap;
}

.bookmarks a {
  display: flex;
  align-items: center;
  gap: 2px;
  height: 32px;
}

/* content */
.workspace {
  display: flex;
  flex: 1;
  min-height: 0;
}

.splitter {
  width: 6px;
  padding-top: 225px;
  background: #f0f0f0;
  border-right: 1px solid #b0b0b0;
}

.sidebar {
  display: flex;
  flex-direction: column;
  align-items: center;
  gap: 16px;
  width: 33px;
  padding: 10px 3px 0 0;
  background: #f0f0f0;
}

.sidebar hr {
  width: 22px;
  margin: -4px 0;
  border: 0;
  border-top: 1px solid #b0b0b0;
}

/* page body with the shaded margins of the GLPI theme */
.viewport {
  flex: 1;
  overflow: hidden;
  padding: 0 10px;
  background:
    linear-gradient(90deg, #c8c8c8, #808080) left top / 10px 149px no-repeat,
    linear-gradient(90deg, #808080, #c8c8c8) right top / 10px 149px no-repeat,
    linear-gradient(#dedede, #dedede) left / 10px 100% no-repeat,
    linear-gradient(#dedede, #dedede) right / 10px 100% no-repeat,
    #fff;
}

.page {
  width: 950px;
  margin: 0 auto;
  color: #1c1c1c;
  font: 11px/13px "Liberation Sans", Arial, sans-serif;
}

/* latin letters, digits and punctuation */
.latin { font-family: "DejaVu Sans", Verdana, sans-serif; }

.grid {
  width: 100%;
  border-spacing: 2px;
  table-layout: fixed;
  background: #f1f1f1;
}

.grid th { padding: 2px 5px; background: #e1cc7b; font-size: 12px; line-height: 14px; }
.grid td { padding: 3px 5px; }
.grid .key { width: 94px; }

.people { margin-top: -2px; }
.people td, .people th { vertical-align: top; }
.people th { height: 45px; padding-top: 5px; }
.people p { display: flex; gap: 8px; margin: 0 0 4px 5px; height: 16px; line-height: 16px; }
.people p:last-child { margin-bottom: 0; }
.people .mail { margin-left: -4px; }
.people .assigned { width: 283px; }

.ticket { margin-top: 10px; }
.ticket .text { width: 470px; }
.ticket tr:first-child th { height: 19px; }
.ticket .description { padding-right: 12px; }

.add-note {
  display: block;
  padding: 15px 0 14px;
  color: #659900;
  font-weight: bold;
  text-align: center;
}

.notes .type { width: 108px; }
.notes .date { width: 84px; }
.notes .author { width: 77px; }
.notes th { height: 18px; }

.scrollbar {
  display: flex;
  flex-direction: column;
  align-items: center;
  width: 14px;
  padding: 3px 0;
  background: #c2c2c2;
}

.track {
  display: flex;
  flex: 1;
  width: 10px;
  margin: 4px 0;
  padding-top: 200px;
  border-radius: 5px;
  background: linear-gradient(90deg, #c2c2c2, #d6d6d6);
}

.thumb {
  width: 10px;
  height: 241px;
  border: 1px solid #999;
  border-radius: 5px;
  background: #f0f0f0;
}

/* taskbar */
.taskbar {
  display: flex;
  justify-content: space-between;
  height: 45px;
  flex: none;
  background: linear-gradient(#454545, #1e1e1e);
  border-top: 1px solid #555;
  color: #e4e4e4;
}

.launchers, .tray { display: flex; align-items: center; }
.launchers button { width: 46px; height: 44px; }
.launchers .kmenu { width: 32px; }
.launchers .running { background: radial-gradient(closest-side, #bfe0e0, transparent) center bottom / 34px 6px no-repeat; }

.tray span {
  display: flex;
  justify-content: center;
  width: 28px;
}

.tray .lang { color: #fff; font-weight: bold; }
.gray { color: #777; }
.sky { color: #74b4f0; }
.blue { color: #1c54b4; }
.tray .trash { width: 36px; }

.clock {
  display: flex;
  flex-direction: column;
  align-items: center;
  width: 100px;
}

.clock b { font-size: 24px; font-weight: normal; line-height: 26px; }
.clock small { font-size: 12px; line-height: 16px; }
.tray > svg + svg { margin-left: 5px; }
```
FILE: script.js
```javascript
// GLPI text: cyrillic keeps the page font, everything else goes to .latin
const page = document.querySelector(".page");
const walker = document.createTreeWalker(page, NodeFilter.SHOW_TEXT);
const nodes = [];
while (walker.nextNode()) {
  if (walker.currentNode.data.trim()) nodes.push(walker.currentNode);
}

nodes.forEach(node => {
  const parts = document.createDocumentFragment();
  node.data.split(/([^А-Яа-яЁё\s]+|\s+)/).forEach(text => {
    if (!text) return;
    if (/[А-Яа-яЁё]/.test(text)) {
      parts.appendChild(document.createTextNode(text));
    } else {
      const span = document.createElement("span");
      span.className = "latin";
      span.textContent = text;
      parts.appendChild(span);
    }
  });
  node.replaceWith(parts);
});
```
